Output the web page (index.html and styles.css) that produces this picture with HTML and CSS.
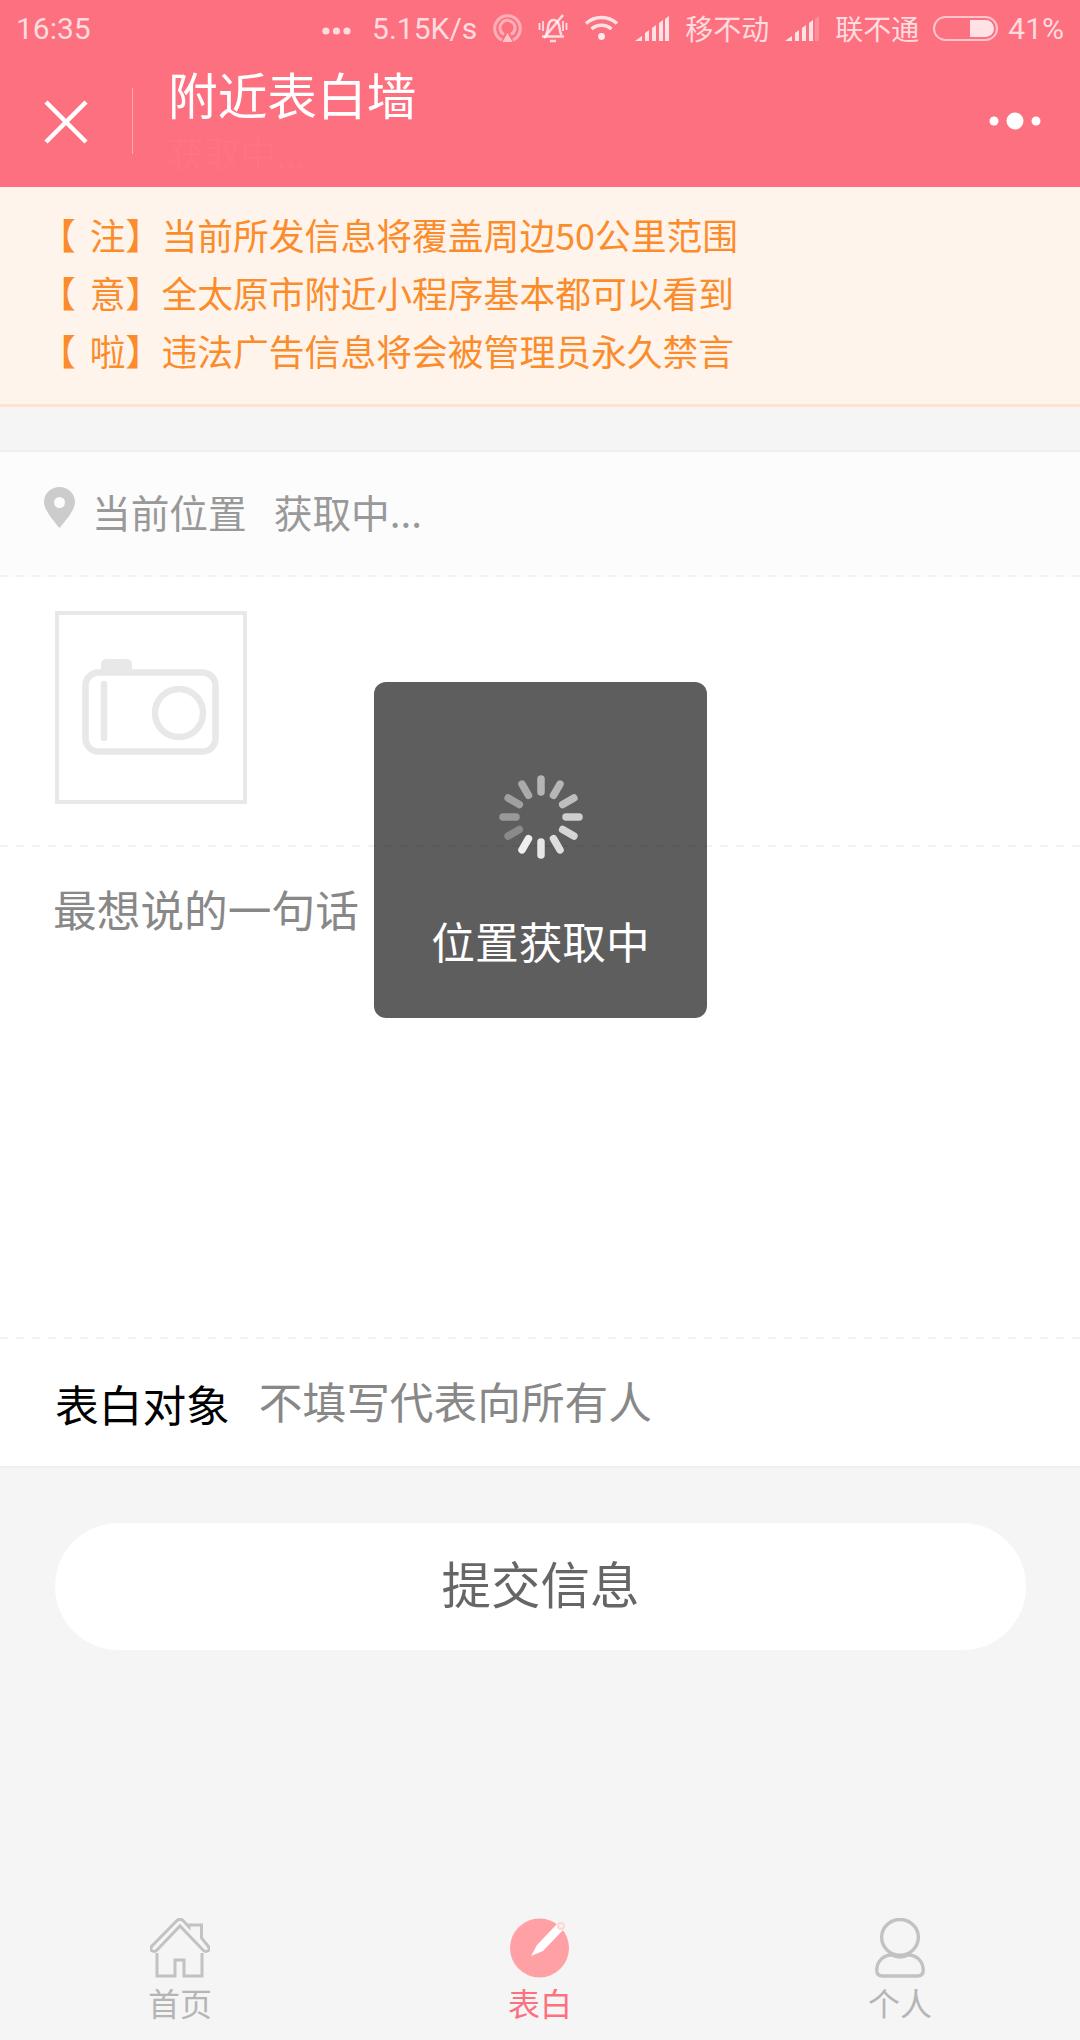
FILE: index.html
```html
<!DOCTYPE html>
<html lang="zh-CN">
  <head>
    <meta charset="UTF-8" />
    <title>附近表白墙</title>
    <link rel="stylesheet" href="styles.css">
  </head>
  <body>
    <div class="page">
      <div class="header">
        <div class="status">
          <span class="time">16:35</span>
          <div class="status-right">
            <svg class="dots" width="29" height="10" viewBox="0 0 29 10"><circle cx="4" cy="5" r="3.6"/><circle cx="14.5" cy="5" r="3.6"/><circle cx="25" cy="5" r="3.6"/></svg>
            <span class="speed">5.15K/s</span>
            <svg width="29" height="28" viewBox="0 0 29 28" fill="none" stroke="#fff" stroke-opacity=".45" stroke-width="3"><path d="M9 26A12.800 12.800 0 1 1 20 26"/><path d="M11 20.500A7.500 7.500 0 1 1 18 20.500"/><path d="M9.500 28l5-9 5 9z" fill="#fff" fill-opacity=".6" stroke="none"/></svg>
            <svg width="30" height="29" viewBox="0 0 30 29" fill="none" stroke="#fff" stroke-opacity=".75" stroke-width="2.500"><path d="M8 21c2-3 1.500-6 2.500-10 .8-3 3-5 5-5s4.500 2 5.500 5c1 4 .5 7 2.500 10"/><path d="M4 22.500h22"/><path d="M1.500 9v7M5 7v10M28.500 9v7M25 7v10" stroke-width="1.800"/><path d="M6 24L25 1"/><path d="M12 27h6"/></svg>
            <svg width="35" height="26" viewBox="0 0 35 26" fill="none" stroke="#fff" stroke-opacity=".8" stroke-width="3.500"><path d="M2 8.500c9-8 22-8 31 0"/><path d="M7.500 14c6-5 14-5 20 0"/><circle cx="17.500" cy="21.500" r="3.400" fill="#fff" fill-opacity=".85" stroke="none"/></svg>
            <svg class="signal" width="34" height="25" viewBox="0 0 34 25"><path d="M0 25l7-5v5zM10 17l4-3v11h-4zM17 12l4-3v16h-4zM24 7l4-3v21h-4zM30 3l4-3v25h-4z"/></svg>
            <span class="carrier">移不动</span>
            <svg class="signal" width="34" height="25" viewBox="0 0 34 25"><path d="M0 25l7-5v5zM10 17l4-3v11h-4zM17 12l4-3v16h-4zM24 7l4-3v21h-4z"/><path d="M30 3l4-3v25h-4z" fill-opacity=".25"/></svg>
            <span class="carrier">联不通</span>
            <div class="battery"><div class="battery-fill"></div></div>
            <span class="percent">41%</span>
          </div>
        </div>
        <div class="nav">
          <svg class="close" width="44" height="44" viewBox="0 0 44 44" stroke="#fff" stroke-width="4.500"><path d="M2 2l40 40M42 2L2 42"/></svg>
          <div class="nav-line"></div>
          <div class="nav-titles">
            <div class="title">附近表白墙</div>
            <div class="subtitle">获取中...</div>
          </div>
          <svg class="more" width="52" height="18" viewBox="0 0 52 18" fill="#fff"><circle cx="5" cy="9" r="4.500"/><circle cx="26" cy="9" r="8.500"/><circle cx="47" cy="9" r="4.500"/></svg>
        </div>
      </div>

      <div class="notice">
        <div>【 注】当前所发信息将覆盖周边50公里范围</div>
        <div>【 意】全太原市附近小程序基本都可以看到</div>
        <div>【 啦】违法广告信息将会被管理员永久禁言</div>
      </div>

      <div class="form">
        <div class="location dashed">
          <svg width="31" height="41" viewBox="0 0 31 41"><path fill-rule="evenodd" fill="#ccc" d="M15.500 0C7 0 0 6.500 0 15c0 8 9 18 15.500 26C22 33 31 23 31 15 31 6.500 24 0 15.500 0zm0 10a5.500 5.500 0 1 1 0 11 5.500 5.500 0 0 1 0-11z"/></svg>
          <span class="loc-label">当前位置</span>
          <span class="loc-value">获取中...</span>
        </div>
        <div class="photo-row dashed">
          <div class="photo-box">
            <svg width="138" height="96" viewBox="0 0 138 96" fill="none" stroke="#e8e8e8" stroke-width="6.500"><path d="M19 13V5a5 5 0 0 1 5-5h21a5 5 0 0 1 5 5v8z" fill="#e8e8e8" stroke="none"/><rect x="3.500" y="13.500" width="130" height="79" rx="13"/><path d="M22 25v54" stroke-linecap="round"/><circle cx="97" cy="54" r="24"/></svg>
          </div>
        </div>
        <div class="message dashed">最想说的一句话</div>
        <div class="target">
          <span class="target-label">表白对象</span>
          <span class="target-hint">不填写代表向所有人</span>
        </div>
      </div>

      <div class="submit-wrap">
        <button class="submit">提交信息</button>
      </div>

      <div class="tabs">
        <div class="tab">
          <svg width="60" height="60" viewBox="0 0 60 60" fill="none" stroke="#c2c2c2" stroke-width="3"><path d="M7 35v23h18V42h9v16h18V35"/><path d="M39 9V7h12.500v13l6.500 8c2 2.500 1.500 4-.5 5-1.500.8-3 .5-4.500-1L30 8 7 32c-1.500 1.500-3 1.800-4.500 1-2-1-2.500-2.500-.5-5L27 2.500c1.500-1.500 4.500-1.500 6 0z"/></svg>
          <span>首页</span>
        </div>
        <div class="tab active">
          <svg width="60" height="60" viewBox="0 0 60 60"><circle cx="29.500" cy="30" r="29.500" fill="#ffa0a4"/><path d="M21 38l6-11L47 6l6 6-20 21z" fill="#fff"/><circle cx="51" cy="8" r="3" fill="none" stroke="#ffd6d8" stroke-width="2"/></svg>
          <span>表白</span>
        </div>
        <div class="tab">
          <svg width="52" height="60" viewBox="0 0 52 62" fill="none" stroke="#c2c2c2" stroke-width="3.500"><ellipse cx="26" cy="20" rx="19" ry="18.500"/><path d="M17 38C8 39 2 45 2 54c0 4 2 6 6 6h36c4 0 6-2 6-6 0-9-6-15-15-16-6 3-12 3-18 0z"/></svg>
          <span>个人</span>
        </div>
      </div>

      <div class="toast">
        <svg class="spinner" width="84" height="84" viewBox="-42 -42 84 84" stroke="#fff" stroke-width="7.500" stroke-linecap="round">
          <path d="M0-38V-25" opacity=".54"/>
          <path d="M0-38V-25" opacity=".55" transform="rotate(30)"/>
          <path d="M0-38V-25" opacity=".6" transform="rotate(60)"/>
          <path d="M0-38V-25" opacity=".7" transform="rotate(90)"/>
          <path d="M0-38V-25" opacity=".75" transform="rotate(120)"/>
          <path d="M0-38V-25" opacity=".8" transform="rotate(150)"/>
          <path d="M0-38V-25" opacity=".85" transform="rotate(180)"/>
          <path d="M0-38V-25" opacity=".9" transform="rotate(210)"/>
          <path d="M0-38V-25" opacity=".27" transform="rotate(240)"/>
          <path d="M0-38V-25" opacity=".37" transform="rotate(270)"/>
          <path d="M0-38V-25" opacity=".41" transform="rotate(300)"/>
          <path d="M0-38V-25" opacity=".47" transform="rotate(330)"/>
        </svg>
        <div class="toast-text">位置获取中</div>
      </div>
    </div>
  </body>
</html>
```

FILE: styles.css
```css
* {
  box-sizing: border-box;
}
body {
  margin: 0;
  background: #f5f5f5;
  font-family: "Noto Sans CJK SC", "Noto Sans", sans-serif;
}
.page {
  position: relative;
  width: 1080px;
  height: 2040px;
  display: flex;
  flex-direction: column;
  overflow: hidden;
}

.header {
  height: 187px;
  background: #fd7080;
  color: #fff;
}
.status {
  height: 56px;
  padding: 0 16px;
  display: flex;
  justify-content: space-between;
  align-items: center;
  color: rgba(255, 255, 255, 0.75);
  font-family: Roboto, "Noto Sans CJK SC", sans-serif;
  font-size: 30px;
}
.status-right {
  display: flex;
  align-items: center;
  gap: 16px;
}
.dots {
  fill: rgba(255, 255, 255, 0.75);
  margin-top: 6px;
}
.speed {
  margin-left: 5px;
}
.signal {
  fill: rgba(255, 255, 255, 0.8);
}
.carrier {
  font-family: "Noto Sans CJK SC", sans-serif;
  font-size: 28px;
}
.battery {
  width: 65px;
  height: 25px;
  border: 2px solid rgba(255, 255, 255, 0.6);
  border-radius: 13px;
  padding: 2px;
  display: flex;
  justify-content: flex-end;
  margin-left: -2px;
}
.battery-fill {
  width: 24px;
  background: rgba(255, 255, 255, 0.8);
  border-radius: 0 9px 9px 0;
}
.percent {
  margin-left: -6px;
}

.nav {
  height: 131px;
  display: flex;
  align-items: flex-start;
}
.close {
  margin: 44px 0 0 44px;
}
.nav-line {
  width: 1px;
  height: 66px;
  margin: 32px 0 0 44px;
  background: rgba(255, 255, 255, 0.4);
}
.nav-titles {
  margin-left: 35px;
  flex: 1;
}
.title {
  font-size: 49.700px;
  line-height: 74px;
}
.subtitle {
  font-size: 36px;
  line-height: 44px;
  color: rgba(255, 255, 255, 0.03);
}
.more {
  margin: 56px 39px 0 0;
}

.notice {
  padding: 18px 40px 25px;
  background: #fff4ec;
  border-bottom: 3px solid #ffe1cf;
  color: #fb8c2b;
  font-size: 35.800px;
  line-height: 58px;
  word-spacing: 6px;
}

.form {
  margin-top: 43px;
  background: #fff;
  border-top: 2px solid #eee;
  border-bottom: 2px solid #eee;
}
.dashed {
  background-image: repeating-linear-gradient(90deg, #f2f2f2 0 8px, transparent 8px 16px);
  background-size: 100% 2px;
  background-position: left bottom;
  background-repeat: no-repeat;
}
.location {
  height: 125px;
  padding: 0 44px 2px;
  display: flex;
  align-items: center;
  background-color: #fcfcfc;
  color: #999;
  font-size: 38.700px;
}
.location svg {
  margin-top: -12px;
}
.loc-label {
  margin: -6px 27px 0 17px;
}
.loc-value {
  margin-top: -6px;
}
.photo-row {
  height: 270px;
  padding: 34px 55px 0;
}
.photo-box {
  width: 192px;
  height: 193px;
  border: 4px solid #e8e8e8;
  display: flex;
  justify-content: center;
  padding-top: 44px;
}
.message {
  height: 492px;
  padding: 31px 53px 0;
  color: #888;
  font-size: 43.700px;
  line-height: 60px;
}
.target {
  height: 127px;
  padding: 0 55px;
  display: flex;
  align-items: center;
  font-size: 43.700px;
}
.target-label {
  color: #000;
}
.target-hint {
  margin: -6px 0 0 29px;
  color: #888;
}

.submit-wrap {
  padding: 55px 54px 0 55px;
}
.submit {
  width: 100%;
  height: 127px;
  padding: 0 0 8px;
  border: 0;
  border-radius: 64px;
  background: #fff;
  color: #666;
  font-family: inherit;
  font-size: 49.500px;
}

.tabs {
  margin-top: auto;
  height: 122px;
  display: grid;
  grid-template-columns: repeat(3, 1fr);
  color: #b5b5b5;
  font-size: 32px;
}
.tab {
  display: flex;
  flex-direction: column;
  align-items: center;
}
.tab span {
  margin-top: 2px;
  line-height: 44px;
}
.active {
  color: #fd7080;
}

.toast {
  position: absolute;
  left: 374px;
  top: 682px;
  width: 333px;
  height: 336px;
  border-radius: 12px;
  background: rgba(0, 0, 0, 0.63);
  color: #fff;
  display: flex;
  flex-direction: column;
  align-items: center;
  padding-top: 93px;
}
.toast-text {
  margin-top: 51px;
  font-size: 43.700px;
  line-height: 60px;
}
```
